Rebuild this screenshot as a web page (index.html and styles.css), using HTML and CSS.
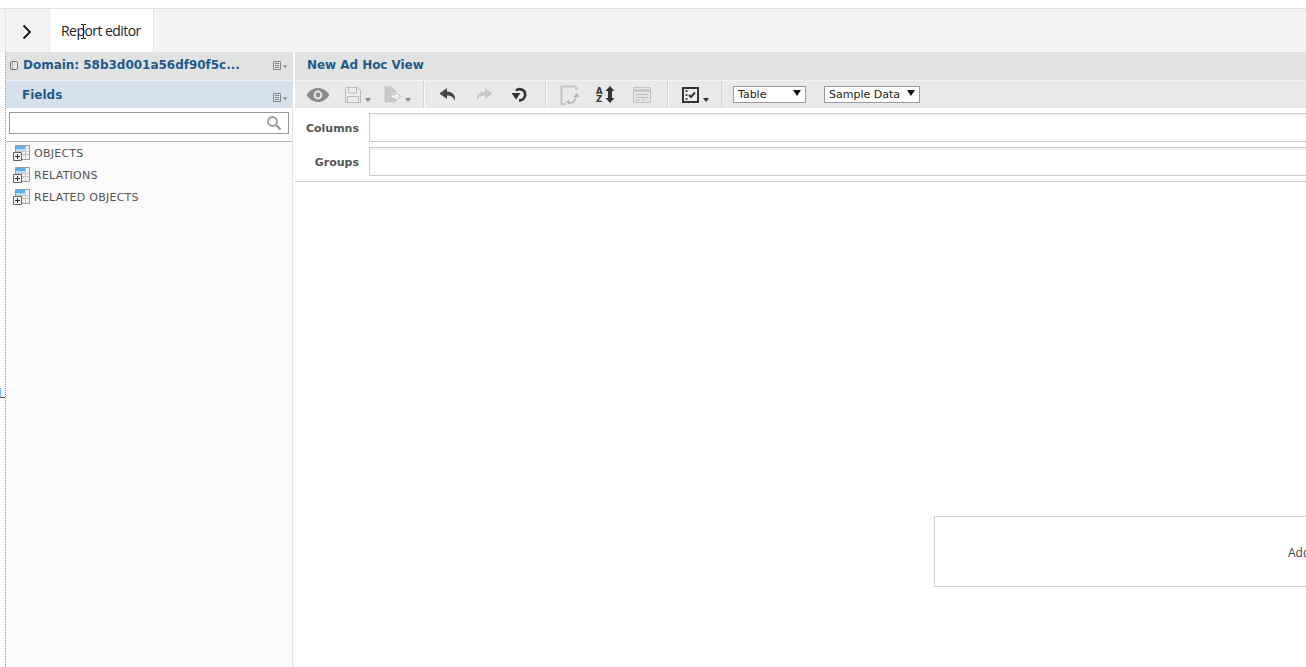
FILE: index.html
```html
<!DOCTYPE html>
<html lang="en">
<head>
<meta charset="utf-8">
<title>Report editor</title>
<link rel="stylesheet" href="styles.css">
</head>
<body>
<div class="topgap"></div>
<header class="tabbar">
  <button class="toggle" aria-label="Toggle">
    <svg width="12" height="16" viewBox="0 0 12 16"><path d="M2.500 1.500l6.500 6.500-6.500 6.500" fill="none" stroke="#111" stroke-width="1.800"/></svg>
  </button>
  <div class="tab">Report editor<svg class="cursor" width="7" height="15" viewBox="0 0 7 15"><path d="M1 .5h2l.5.5.5-.5h2M3.500 1v13M1 14.500h2l.5-.5.5.5h2" fill="none" stroke="#111"/></svg></div>
</header>
<div class="workspace">
  <i class="edge-mark"></i>
  <aside class="side">
    <div class="side-head domain">
      <svg class="dom-icon" width="8" height="9" viewBox="0 0 8 9"><rect x=".5" y=".5" width="7" height="8" rx="1.500" fill="#e8e8e8" stroke="#777"/><path d="M2.500 1v7" stroke="#aaa"/></svg>
      <span class="domain-name">Domain: 58b3d001a56df90f5c...</span>
      <svg class="menu-icon" width="15" height="9" viewBox="0 0 15 9"><path d="M.5.500h7v8h-7z" fill="none" stroke="#888"/><path d="M2 2.500h4M2 4.500h4M2 6.500h4" stroke="#888"/><path d="M9.500 4.500h5l-2.500 2.500z" fill="#888"/></svg>
    </div>
    <div class="side-head fields">
      <span class="fields-name">Fields</span>
      <svg class="menu-icon low" width="15" height="9" viewBox="0 0 15 9"><path d="M.5.500h7v8h-7z" fill="none" stroke="#888"/><path d="M2 2.500h4M2 4.500h4M2 6.500h4" stroke="#888"/><path d="M9.500 4.500h5l-2.500 2.500z" fill="#888"/></svg>
    </div>
    <div class="search-row">
      <div class="search">
        <svg width="16" height="16" viewBox="0 0 16 16"><circle cx="6.500" cy="6.500" r="4.500" fill="none" stroke="#999" stroke-width="1.800"/><path d="M10 10l4.500 4.500" stroke="#999" stroke-width="2.400"/></svg>
      </div>
    </div>
    <ul class="tree">
      <li class="tree-item"><svg class="node" width="17" height="16" viewBox="0 0 17 16"><use href="#node-icon"/></svg>OBJECTS</li>
      <li class="tree-item"><svg class="node" width="17" height="16" viewBox="0 0 17 16"><use href="#node-icon"/></svg>RELATIONS</li>
      <li class="tree-item"><svg class="node" width="17" height="16" viewBox="0 0 17 16"><use href="#node-icon"/></svg>RELATED OBJECTS</li>
    </ul>
  </aside>
  <main class="main">
    <div class="view-title">New Ad Hoc View</div>
    <div class="toolbar">
      <div class="tool-group first">
        <svg class="eye" width="24" height="16" viewBox="0 0 24 16"><path d="M.5 8C3.500 3.500 7.500 1 12 1s8.500 2.500 11.500 7c-3 4.500-7 7-11.500 7S3.500 12.500.5 8z" fill="#8a8a8a"/><circle cx="12" cy="8" r="4.400" fill="#e9e9e9"/><circle cx="12" cy="8" r="2.400" fill="#8a8a8a"/></svg>
        <span class="tool save"><svg width="16" height="16" viewBox="0 0 16 16"><path d="M.5.500h12l3 3v12H.5z" fill="#eee" stroke="#bbb"/><path d="M3.500 1v5h8V1M2.500 9.500h11v6h-11z" fill="none" stroke="#bbb"/></svg><i class="caret"></i></span>
        <span class="tool doc"><svg width="17" height="17" viewBox="0 0 17 17"><path d="M.5.500h7l4 4V7h-4v5h4v4.500H.5z" fill="#c9c9c9"/><path d="M7 8.500h4V5.500l5.500 5-5.500 5v-3H7z" fill="#f0f0f0" stroke="#bdbdbd"/></svg><i class="caret"></i></span>
      </div>
      <div class="tool-group undo">
        <svg width="18" height="13" viewBox="0 0 18 13"><path d="M8 0L.5 5.500 8 11V7.500c4 0 6.500 1.500 8 5.500 1-6-3-9.500-8-9.500z" fill="#444"/></svg>
        <svg class="redo" width="18" height="13" viewBox="0 0 18 13"><path d="M10 0l7.500 5.500L10 11V7.500c-4 0-6.500 1.500-8 5.500-1-6 3-9.500 8-9.500z" fill="#c8c8c8"/></svg>
        <svg class="reset" width="16" height="15" viewBox="0 0 16 15"><path d="M5 3.500C8 1 14 2 14.200 7.500c0 3.500-2.700 5.800-6.200 6" fill="none" stroke="#333" stroke-width="2.600"/><path d="M.5 6h9L5 12.500z" fill="#333"/></svg>
      </div>
      <div class="tool-group sort">
        <svg width="20" height="20" viewBox="0 0 20 20"><path d="M2 1.500h14M16 1.500V5M1.500 1v18H6" fill="none" stroke="#c6c6c6" stroke-width="2"/><path d="M8 17.500c4 1 7.500-.5 8-6" fill="none" stroke="#b8b8b8" stroke-width="1.800"/><path d="M13 12l3.500-4 3.500 4zM9 14.500v5l-3-2.500z" fill="#b8b8b8"/></svg>
        <svg class="az" width="20" height="18" viewBox="0 0 20 18"><path d="M15 0l4.500 5H17v7h2.500L15 17l-4.500-5H13V5h-2.500z" fill="#333"/><text x="1" y="7.500" class="az-t">A</text><text x="1" y="16" class="az-t">Z</text></svg>
        <svg class="form" width="18" height="16" viewBox="0 0 18 16"><path d="M.5.500h17v15H.5z" fill="#e4e4e4" stroke="#c2c2c2"/><path d="M1 3.500h16" stroke="#bdbdbd" stroke-width="2"/><path d="M3 7.500h12M3 10.500h12M3 13h4M9 13h2" stroke="#bcbcbc"/></svg>
      </div>
      <div class="tool-group check">
        <span class="tool"><svg width="17" height="16" viewBox="0 0 17 16"><path d="M1 1h15v14H1z" fill="#eee" stroke="#333" stroke-width="2"/><path d="M3.500 4h2M3.500 8h2M3.500 12h2" stroke="#222" stroke-width="1.500"/><path d="M7 8l2 2 4-4.500" fill="none" stroke="#333" stroke-width="1.900"/></svg><i class="caret dark"></i></span>
      </div>
      <div class="selects">
        <div class="select table">Table<i class="sel-arrow"></i></div>
        <div class="select sample">Sample Data<i class="sel-arrow"></i></div>
      </div>
    </div>
    <div class="axis">
      <div class="axis-row"><label class="axis-label">Columns</label><div class="axis-box"></div></div>
      <div class="axis-row"><label class="axis-label">Groups</label><div class="axis-box"></div></div>
    </div>
    <div class="canvas">
      <div class="message">Add</div>
    </div>
  </main>
</div>
<svg class="defs" width="0" height="0">
  <defs>
    <g id="node-icon">
      <path d="M2.500 .5h14v14h-14z" fill="#f1f1f1" stroke="#9a9a9a"/>
      <path d="M3 1h10v3H3z" fill="#5fb0ee"/>
      <path d="M3 4h10v3H3z" fill="#b9def7"/>
      <path d="M8.500 4v10M12.500 1v13M3 6.500h13M3 9.500h13" stroke="#c8c8c8"/>
      <path d="M.5 7.500h8v8h-8z" fill="#f6f6f6" stroke="#666"/>
      <path d="M2 11.500h5M4.500 9v5" stroke="#333"/>
    </g>
  </defs>
</svg>
</body>
</html>
```

FILE: styles.css
```css
* { box-sizing: border-box; }
html, body { margin: 0; height: 100%; }
body {
  overflow: hidden;
  background: #fff;
  font-family: "DejaVu Sans", Verdana, sans-serif;
  display: flex;
  flex-direction: column;
  width: 1306px;
  height: 667px;
}
.topgap { height: 8px; flex: none; }
.tabbar {
  flex: none;
  height: 44px;
  display: flex;
  background: #f4f4f4;
  border-top: 1px solid #e0e0e0;
  padding-left: 5px;
}
.toggle {
  width: 44px;
  padding: 2px 2px 0 0;
  background: #f4f4f4;
  border: 0;
  border-left: 1px solid #e4e4e4;
  display: flex;
  align-items: center;
  justify-content: center;
}
.tab {
  position: relative;
  width: 105px;
  background: #fff;
  border-left: 1px solid #e8e8e8;
  border-right: 1px solid #e4e4e4;
  font: 14px/44px "Open Sans", sans-serif;
  letter-spacing: -.55px;
  padding-left: 11px;
  color: #222;
}
.cursor { position: absolute; left: 30px; top: 15px; }
.workspace { flex: 1; display: flex; min-height: 0; position: relative; }
.edge-mark {
  position: absolute;
  left: 0;
  top: 336px;
  width: 5px;
  height: 10px;
  border-left: 1px solid #7ab8e6;
  border-bottom: 1px solid #444;
}
.side {
  flex: none;
  width: 288px;
  margin-left: 5px;
  border-left: 1px dotted #999;
  border-right: 1px solid #e2e2e2;
  background: #fafafa;
  display: flex;
  flex-direction: column;
}
.side-head { display: flex; align-items: center; flex: none; position: relative; }
.domain { height: 29px; background: #e1e3e2; border-bottom: 1px solid #f2f2f2; padding-left: 4px; }
.dom-icon { flex: none; margin-top: -2px; }
.domain-name { margin-left: 5px; font-size: 12px; font-weight: bold; color: #1f5a8c; white-space: nowrap; padding-bottom: 3px; letter-spacing: -.02px; }
.fields { height: 27px; background: #d6e1ee; padding-left: 16px; }
.fields-name { font-size: 12px; font-weight: bold; color: #1f5a8c; }
.menu-icon { position: absolute; left: 267px; top: 9px; }
.menu-icon.low { top: 12px; }
.search-row { flex: none; padding: 4px 3px 7px; border-bottom: 1px solid #b5b5b5; background: #fff; }
.search {
  height: 22px;
  border: 1px solid #999;
  background: #fff;
  display: flex;
  justify-content: flex-end;
  align-items: center;
  padding-right: 6px;
}
.tree { list-style: none; margin: 0; padding: 0 0 0 7px; }
.tree-item {
  height: 22px;
  display: flex;
  align-items: center;
  font-size: 11px;
  color: #555;
  letter-spacing: .25px;
}
.node { flex: none; margin: 0 4px 0 0; }
.main { flex: none; width: 1400px; margin-left: 2px; display: flex; flex-direction: column; }
.view-title {
  flex: none;
  height: 29px;
  background: #e1e3e2;
  border-bottom: 1px solid #f2f2f2;
  padding: 6px 0 0 12px;
  font-size: 12px;
  font-weight: bold;
  line-height: 15px;
  color: #1f5a8c;
  letter-spacing: -.05px;
}
.toolbar { flex: none; height: 27px; background: #e9e9e9; display: flex; align-items: center; }
.tool-group { height: 27px; display: flex; align-items: center; border-right: 1px solid #d4d4d4; }
.tool-group + .tool-group { border-left: 1px solid #f8f8f8; }
.first { width: 129px; padding-left: 11px; }
.tool { display: flex; align-items: center; }
.save { margin-left: 15px; }
.doc { margin-left: 13px; }
.caret { width: 0; height: 0; border: 3.500px solid transparent; border-top: 4px solid #888; border-bottom: 0; margin: 10px 0 0 4px; flex: none; }
.caret.dark { border-top-color: #333; }
.undo { width: 122px; padding-left: 14px; }
.redo { margin-left: 18px; }
.reset { margin-left: 18px; }
.sort { width: 122px; padding-left: 13px; }
.az { margin-left: 15px; }
.form { margin-left: 18px; }
.az-t { font: bold 8.500px "DejaVu Sans", sans-serif; fill: #333; }
.check { width: 54px; padding-left: 13px; }
.selects { display: flex; padding-left: 11px; gap: 18px; margin-top: -1px; }
.select {
  height: 17px;
  border: 1px solid #9a9a9a;
  background: #fff;
  font-size: 11px;
  line-height: 15px;
  color: #222;
  padding-left: 4px;
  position: relative;
}
.table { width: 73px; }
.sample { width: 96px; }
.sel-arrow {
  position: absolute;
  right: 4px;
  top: 3px;
  border: 4px solid transparent;
  border-top: 6px solid #111;
  border-bottom: 0;
  width: 0;
  height: 0;
}
.axis { flex: none; border-bottom: 1px solid #ccc; padding: 5px 0; background: #fff; display: flex; flex-direction: column; gap: 5px; }
.axis-row { display: flex; align-items: center; height: 29px; }
.axis-label { width: 64px; text-align: right; font-size: 11px; font-weight: bold; color: #555; margin-right: 10px; flex: none; padding-top: 2px; }
.axis-box { flex: 1; height: 29px; border: 1px solid #ccc; box-shadow: inset 0 2px 3px #f2f2f2; }
.canvas { flex: 1; padding: 334px 0 0 639px; }
.message {
  width: 720px;
  height: 71px;
  border: 1px solid #d2d2d2;
  padding-left: 353px;
  font: 12px/71px "Open Sans", sans-serif;
  color: #444;
  white-space: nowrap;
}
.defs { position: absolute; }
```
